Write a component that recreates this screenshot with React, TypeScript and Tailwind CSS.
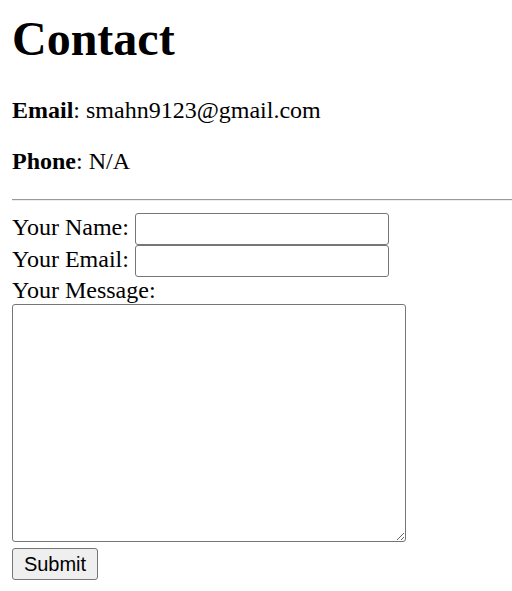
import React from "react";

export default function App() {
  return (
    <div className="min-h-screen overflow-hidden bg-white p-[12px] text-black [font-family:'Liberation_Serif','Times_New_Roman',serif]">
      <h1 className="m-0 text-[48px] font-bold leading-[53px]">Contact</h1>
      <p className="mt-[32px] text-[24px] leading-[27px]">
        <b>Email</b>: smahn9123@gmail.com
      </p>
      <p className="mt-[24px] text-[24px] leading-[27px]">
        <b>Phone</b>: N/A
      </p>
      <hr className="mt-[24px] mr-[-12px] border-0 border-t border-t-[#9a9a9a] border-b border-b-[#eeeeee]" />
      <form className="mt-[12px] flex flex-col items-start text-[24px]" onSubmit={(e) => e.preventDefault()}>
        <div className="flex h-[32px] items-center">
          <label className="leading-[27px] pb-[3px]">Your Name:</label>
          <input
            type="text"
            className="ml-[6px] h-[32px] w-[254px] rounded-[3px] border border-[#767676] bg-white px-[3px] text-[20px] outline-none"
          />
        </div>
        <div className="flex h-[32px] items-center">
          <label className="leading-[27px] pb-[3px]">Your Email:</label>
          <input
            type="email"
            className="ml-[6px] h-[32px] w-[254px] rounded-[3px] border border-[#767676] bg-white px-[3px] text-[20px] outline-none"
          />
        </div>
        <label className="leading-[27px]">Your Message:</label>
        <textarea className="block h-[238px] w-[394px] resize rounded-[3px] border border-[#767676] bg-white text-[20px] outline-none" />
        <button
          type="submit"
          className="mt-[6px] block h-[32px] w-[86px] rounded-[3px] border border-[#767676] bg-[#efefef] text-[20px] leading-[23px] text-black [font-family:'Liberation_Sans',Arial,sans-serif]"
        >
          Submit
        </button>
      </form>
    </div>
  );
}
